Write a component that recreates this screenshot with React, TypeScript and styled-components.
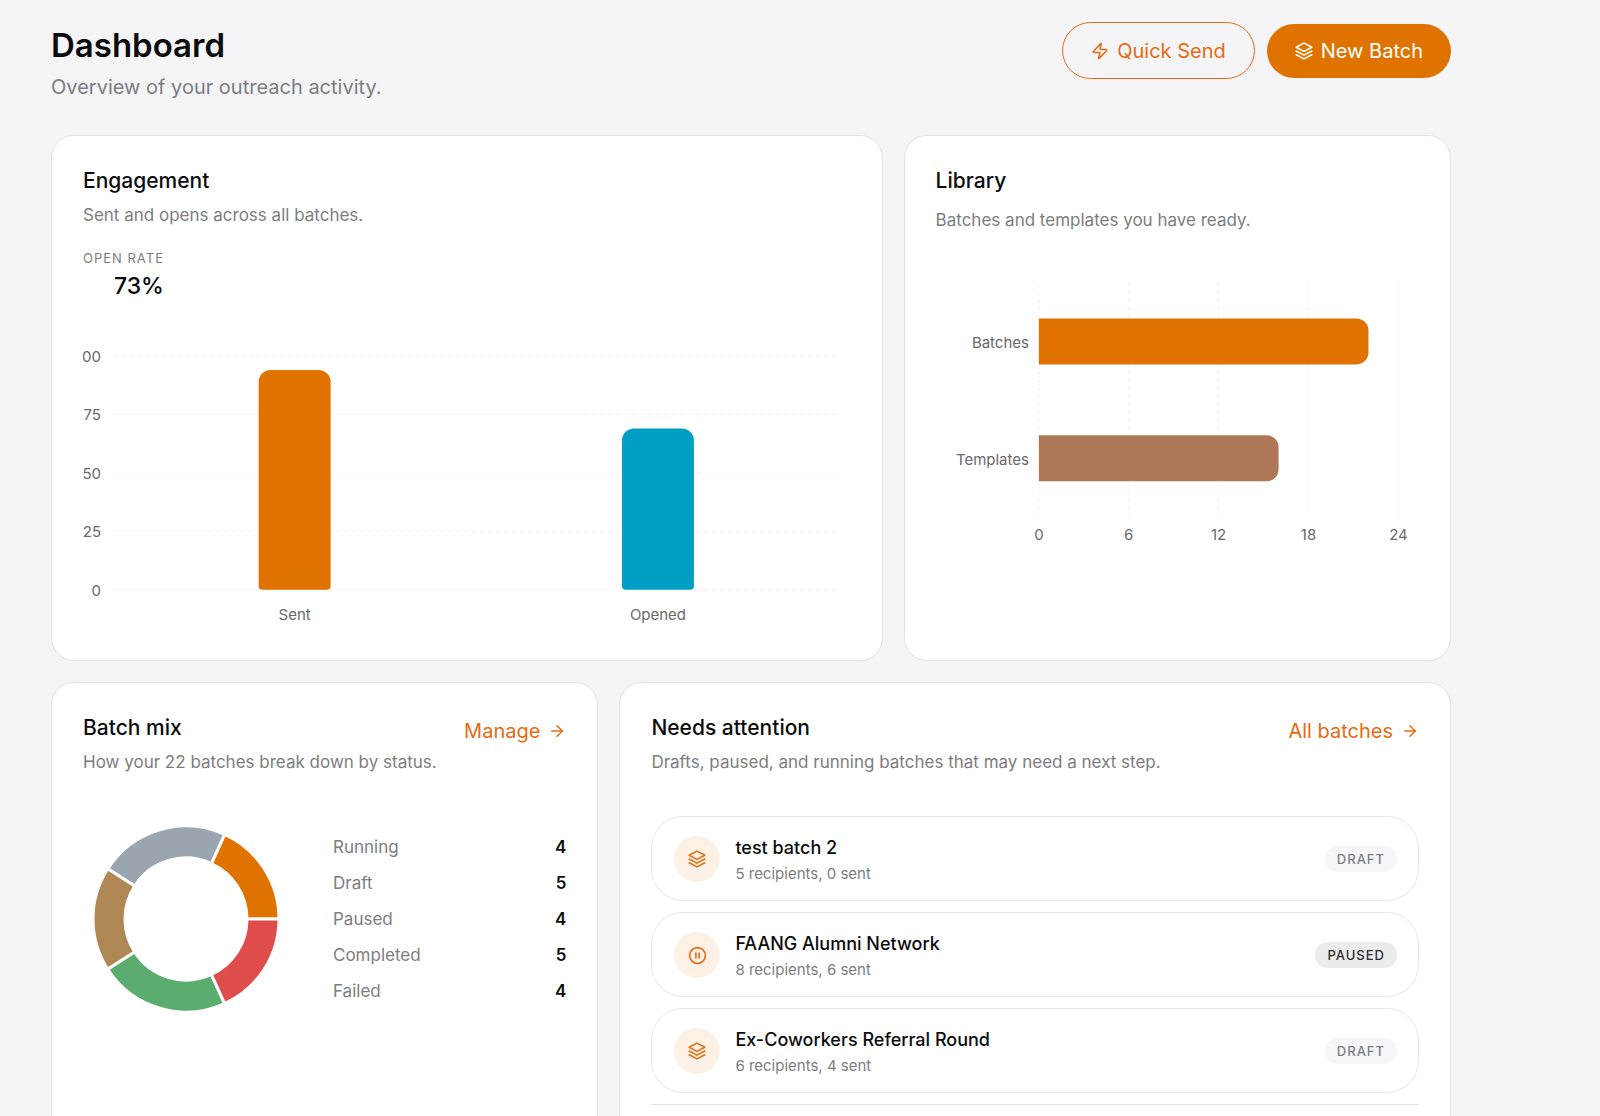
import React from "react";
import styled, { createGlobalStyle } from "styled-components";
import { ArrowRight, CirclePause, Zap } from "lucide-react";

const color = {
  page: "#f5f5f7",
  card: "#ffffff",
  line: "#e3e3e6",
  softLine: "#e9e9eb",
  ink: "#0b0b0d",
  muted: "#7d7d80",
  axis: "#69696c",
  orange: "#e07200",
  link: "#e56c10",
  teal: "#009fc3",
  clay: "#ae7858",
};

const GlobalStyle = createGlobalStyle`
  *, *::before, *::after { box-sizing: border-box; }
  body {
    margin: 0;
    background: ${color.page};
    color: ${color.ink};
    font-family: Inter, "Liberation Sans", sans-serif;
    -webkit-font-smoothing: antialiased;
  }
  h1, h2, h3, p, ul, dl, dd { margin: 0; padding: 0; }
`;

const Page = styled.div`
  height: 100vh;
  overflow: hidden;
  padding: 22px 51px;
`;

const Content = styled.main`
  max-width: 1400px;
`;

const Header = styled.header`
  display: flex;
  justify-content: space-between;
  align-items: flex-start;
  margin-bottom: 32px;
`;

const PageTitle = styled.h1`
  margin-bottom: 3px;
  font-size: 33px;
  line-height: 46px;
  font-weight: 600;
`;

const PageLead = styled.p`
  font-size: 20px;
  line-height: 32px;
  color: ${color.muted};
`;

const Actions = styled.div`
  display: flex;
  align-items: center;
  gap: 12px;
`;

const Button = styled.button<{ $filled?: boolean }>`
  display: inline-flex;
  align-items: center;
  gap: 8px;
  height: ${(p) => (p.$filled ? 54 : 57)}px;
  padding: 0 28px;
  border: ${(p) => (p.$filled ? "0" : `1px solid ${color.link}`)};
  border-radius: 29px;
  background: ${(p) => (p.$filled ? color.orange : "transparent")};
  color: ${(p) => (p.$filled ? "#fff" : color.link)};
  font: 400 20px/28px Inter, "Liberation Sans", sans-serif;
  cursor: pointer;
`;

const Grid = styled.div`
  display: grid;
  grid-template-columns: repeat(5, minmax(0, 1fr));
  gap: 21px;
`;

const Card = styled.section<{ $span: number }>`
  grid-column: span ${(p) => p.$span};
  padding: 31px;
  border: 1px solid ${color.line};
  border-radius: 23px;
  background: ${color.card};
`;

const CardHeader = styled.div`
  display: flex;
  justify-content: space-between;
  align-items: flex-start;
`;

const Heading = styled.div<{ $gap?: number }>`
  display: flex;
  flex-direction: column;
  gap: ${(p) => p.$gap ?? 7}px;
`;

const CardTitle = styled.h2`
  font-size: 21px;
  line-height: 28px;
  font-weight: 500;
`;

const CardText = styled.p`
  font-size: 17px;
  line-height: 26px;
  color: ${color.muted};
`;

const TextLink = styled.a`
  display: inline-flex;
  align-items: center;
  gap: 8px;
  padding-top: 3px;
  font-size: 20px;
  line-height: 28px;
  color: ${color.link};
  text-decoration: none;
`;

const Stat = styled.dl`
  display: inline-flex;
  flex-direction: column;
  gap: 2px;
  margin-top: 20px;
  text-align: right;
`;

const StatLabel = styled.dt`
  font-size: 13px;
  line-height: 20px;
  letter-spacing: 1px;
  text-transform: uppercase;
  color: ${color.muted};
`;

const StatValue = styled.dd`
  font-size: 23px;
  line-height: 32px;
  font-weight: 500;
`;

const Chart = styled.svg`
  display: block;
  width: 100%;
  height: auto;
  margin-top: 32px;
  font-size: 15px;
  fill: ${color.axis};
`;

const GridLine = styled.line`
  stroke: #f1f1f2;
  stroke-dasharray: 4 4;
`;

const MixBody = styled.div`
  display: flex;
  align-items: center;
  gap: 44px;
  margin-top: 41px;
`;

const Donut = styled.svg`
  flex: none;
  width: 206px;
  height: 206px;
`;

const Legend = styled.dl`
  flex: 1;
  display: flex;
  flex-direction: column;
  gap: 10px;
`;

const LegendRow = styled.div`
  display: flex;
  justify-content: space-between;
  font-size: 17px;
  line-height: 26px;
`;

const LegendLabel = styled.dt`
  color: ${color.muted};
`;

const LegendValue = styled.dd`
  font-weight: 600;
`;

const List = styled.ul`
  display: flex;
  flex-direction: column;
  gap: 11px;
  margin-top: 41px;
  list-style: none;
`;

const Item = styled.li`
  display: flex;
  align-items: center;
  gap: 15px;
  height: 85px;
  padding: 2px 21px 0 22px;
  border: 1px solid ${color.softLine};
  border-radius: 32px;
`;

const ItemIcon = styled.span`
  display: flex;
  align-items: center;
  justify-content: center;
  width: 46px;
  height: 46px;
  border-radius: 50%;
  background: #fdf1e5;
  color: ${color.link};
`;

const ItemText = styled.div`
  flex: 1;
`;

const ItemTitle = styled.h3`
  font-size: 18px;
  line-height: 30px;
  font-weight: 500;
`;

const ItemMeta = styled.p`
  font-size: 15px;
  line-height: 22px;
  color: ${color.muted};
`;

const Badge = styled.span<{ $strong?: boolean }>`
  padding: 0 12px;
  border-radius: 13px;
  background: ${(p) => (p.$strong ? "#ececed" : "#f6f6f8")};
  color: ${(p) => (p.$strong ? "#2c2c2e" : color.muted)};
  font-size: 13px;
  line-height: 26px;
  font-weight: 500;
  letter-spacing: 1px;
  text-transform: uppercase;
`;

const ListEnd = styled.hr`
  height: 60px;
  margin: 11px 0 0;
  border: 0;
  border-top: 1px solid ${color.line};
`;

function Layers({ size }: { size: number }) {
  return (
    <svg width={size} height={size} viewBox="0 0 24 24" fill="none" stroke="currentColor"
      strokeWidth="2" strokeLinecap="round" strokeLinejoin="round" aria-hidden="true">
      <path d="M12 1.5 22.5 7 12 12.5 1.5 7Z" />
      <path d="M1.5 12 12 17.5 22.5 12" />
      <path d="M1.5 17 12 22.5 22.5 17" />
    </svg>
  );
}

const engagement = [
  { label: "Sent", value: 94, fill: color.orange },
  { label: "Opened", value: 69, fill: color.teal },
];

const engagementTicks = [
  { value: 100, label: "00" },
  { value: 75, label: "75" },
  { value: 50, label: "50" },
  { value: 25, label: "25" },
  { value: 0, label: "0" },
];

function EngagementChart() {
  const left = 30;
  const right = 757;
  const base = 256;
  const y = (v: number) => base - (v * 234) / 100;
  const band = (right - left) / engagement.length;
  return (
    <Chart viewBox="0 0 768 295" role="img" aria-label="Sent and opened messages">
      {engagementTicks.map((t) => (
        <g key={t.value}>
          <GridLine x1={left} x2={right - 3} y1={y(t.value)} y2={y(t.value)} />
          <text x={18} y={y(t.value) + 6} textAnchor="end">{t.label}</text>
        </g>
      ))}
      {engagement.map((d, i) => {
        const center = left + band * (i + 0.5);
        const x = center - 36;
        const top = y(d.value);
        return (
          <g key={d.label}>
            <path
              fill={d.fill}
              d={`M${x} ${top + 12}a12 12 0 0 1 12-12h48a12 12 0 0 1 12 12V${base - 4}a4 4 0 0 1-4 4h-64a4 4 0 0 1-4-4Z`}
            />
            <text x={center} y={286} textAnchor="middle">{d.label}</text>
          </g>
        );
      })}
    </Chart>
  );
}

const library = [
  { label: "Batches", value: 22, fill: color.orange },
  { label: "Templates", value: 16, fill: color.clay },
];

function LibraryChart() {
  const left = 103;
  const top = 18;
  const step = 15;
  return (
    <Chart viewBox="0 0 484 290" role="img" aria-label="Batches and templates">
      {[0, 6, 12, 18, 24].map((v) => (
        <g key={v}>
          <GridLine x1={left + v * step} x2={left + v * step} y1={top} y2={top + 234} />
          <text x={left + v * step} y={275} textAnchor="middle">{v}</text>
        </g>
      ))}
      {library.map((d, i) => {
        const center = top + 117 * (i + 0.5);
        return (
          <g key={d.label}>
            <path
              fill={d.fill}
              d={`M${left} ${center - 23}h${d.value * step - 12}a12 12 0 0 1 12 12v22a12 12 0 0 1-12 12H${left}Z`}
            />
            <text x={left - 10} y={center + 7} textAnchor="end">{d.label}</text>
          </g>
        );
      })}
    </Chart>
  );
}

const mix = [
  { label: "Running", value: 4, fill: color.orange },
  { label: "Draft", value: 5, fill: "#9aa5af" },
  { label: "Paused", value: 4, fill: "#af8856" },
  { label: "Completed", value: 5, fill: "#5bac6f" },
  { label: "Failed", value: 4, fill: "#de4d4b" },
];

function MixDonut() {
  const total = mix.reduce((sum, d) => sum + d.value, 0);
  const point = (r: number, turn: number) => {
    const a = turn * 2 * Math.PI;
    return `${(103 + r * Math.cos(a)).toFixed(2)} ${(103 - r * Math.sin(a)).toFixed(2)}`;
  };
  let seen = 0;
  return (
    <Donut viewBox="0 0 206 206" role="img" aria-label="Batches by status">
      {mix.map((d) => {
        const from = seen / total;
        seen += d.value;
        const to = seen / total;
        return (
          <path
            key={d.label}
            fill={d.fill}
            stroke="#fff"
            strokeWidth={3}
            d={`M${point(93, from)}A93 93 0 0 0 ${point(93, to)}L${point(61, to)}A61 61 0 0 1 ${point(61, from)}Z`}
          />
        );
      })}
    </Donut>
  );
}

const attention = [
  { title: "test batch 2", meta: "5 recipients, 0 sent", status: "Draft" },
  { title: "FAANG Alumni Network", meta: "8 recipients, 6 sent", status: "Paused" },
  { title: "Ex-Coworkers Referral Round", meta: "6 recipients, 4 sent", status: "Draft" },
];

export default function App() {
  return (
    <Page>
      <GlobalStyle />
      <Content>
        <Header>
          <div>
            <PageTitle>Dashboard</PageTitle>
            <PageLead>Overview of your outreach activity.</PageLead>
          </div>
          <Actions>
            <Button type="button"><Zap size={18} />Quick Send</Button>
            <Button type="button" $filled><Layers size={18} />New Batch</Button>
          </Actions>
        </Header>
        <Grid>
          <Card $span={3}>
            <Heading>
              <CardTitle>Engagement</CardTitle>
              <CardText>Sent and opens across all batches.</CardText>
            </Heading>
            <Stat>
              <StatLabel>Open rate</StatLabel>
              <StatValue>73%</StatValue>
            </Stat>
            <EngagementChart />
          </Card>
          <Card $span={2}>
            <Heading $gap={12}>
              <CardTitle>Library</CardTitle>
              <CardText>Batches and templates you have ready.</CardText>
            </Heading>
            <LibraryChart />
          </Card>
          <Card $span={2}>
            <CardHeader>
              <Heading>
                <CardTitle>Batch mix</CardTitle>
                <CardText>How your 22 batches break down by status.</CardText>
              </Heading>
              <TextLink href="#manage">Manage<ArrowRight size={18} /></TextLink>
            </CardHeader>
            <MixBody>
              <MixDonut />
              <Legend>
                {mix.map((d) => (
                  <LegendRow key={d.label}>
                    <LegendLabel>{d.label}</LegendLabel>
                    <LegendValue>{d.value}</LegendValue>
                  </LegendRow>
                ))}
              </Legend>
            </MixBody>
          </Card>
          <Card $span={3}>
            <CardHeader>
              <Heading>
                <CardTitle>Needs attention</CardTitle>
                <CardText>Drafts, paused, and running batches that may need a next step.</CardText>
              </Heading>
              <TextLink href="#batches">All batches<ArrowRight size={18} /></TextLink>
            </CardHeader>
            <List>
              {attention.map((b) => (
                <Item key={b.title}>
                  <ItemIcon>{b.status === "Paused" ? <CirclePause size={19} /> : <Layers size={18} />}</ItemIcon>
                  <ItemText>
                    <ItemTitle>{b.title}</ItemTitle>
                    <ItemMeta>{b.meta}</ItemMeta>
                  </ItemText>
                  <Badge $strong={b.status === "Paused"}>{b.status}</Badge>
                </Item>
              ))}
            </List>
            <ListEnd />
          </Card>
        </Grid>
      </Content>
    </Page>
  );
}
